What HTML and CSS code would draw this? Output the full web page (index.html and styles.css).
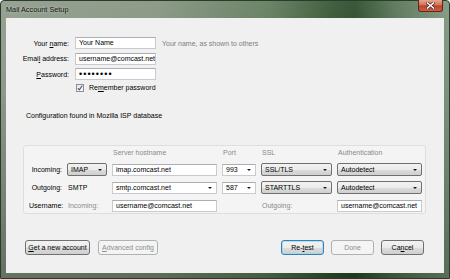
FILE: index.html
```html
<!DOCTYPE html>
<html>
<head>
<meta charset="utf-8">
<link rel="stylesheet" href="styles.css">
</head>
<body>
<div class="window">
  <div class="titlebar">
    <span class="title">Mail Account Setup</span>
    <span class="close">
      <svg width="9" height="7" viewBox="0 0 9 7">
        <path d="M1.5 1 L7.5 6 M7.5 1 L1.5 6" stroke="#4a2a22" stroke-width="3" stroke-linecap="square"/>
        <path d="M1.5 1 L7.5 6 M7.5 1 L1.5 6" stroke="#ffffff" stroke-width="1.6" stroke-linecap="square"/>
      </svg>
    </span>
  </div>
  <div class="content">
    <div class="form">
      <span class="lbl">Your <u>n</u>ame:</span>
      <span class="field">Your Name</span>
      <span class="hint">Your name, as shown to others</span>
      <span class="lbl">Emai<u>l</u> address:</span>
      <span class="field">username@comcast.net</span>
      <span></span>
      <span class="lbl"><u>P</u>assword:</span>
      <span class="field dots">••••••••</span>
      <span></span>
    </div>
    <div class="remember">
      <span class="check">
        <svg width="6" height="6" viewBox="0 0 6 6"><path d="M0.8 3.2 L2.3 4.8 L5.2 0.8" fill="none" stroke="#3b5a86" stroke-width="1.1"/></svg>
      </span>
      <span>Re<u>m</u>ember password</span>
    </div>
    <p class="found">Configuration found in Mozilla ISP database</p>
    <div class="box">
      <span></span><span></span>
      <span class="head">Server hostname</span>
      <span class="head">Port</span>
      <span class="head">SSL</span>
      <span class="head">Authentication</span>

      <span class="lbl">Incoming:</span>
      <span class="select">IMAP<i class="arrow"></i></span>
      <span class="field">imap.comcast.net</span>
      <span class="field combo">993<i class="arrow"></i></span>
      <span class="select">SSL/TLS<i class="arrow"></i></span>
      <span class="select">Autodetect<i class="arrow"></i></span>

      <span class="lbl">Outgoing:</span>
      <span class="plain">SMTP</span>
      <span class="field combo">smtp.comcast.net<i class="arrow"></i></span>
      <span class="field combo">587<i class="arrow"></i></span>
      <span class="select">STARTTLS<i class="arrow"></i></span>
      <span class="select">Autodetect<i class="arrow"></i></span>

      <span class="lbl">Username:</span>
      <span class="plain muted">Incoming:</span>
      <span class="field">username@comcast.net</span>
      <span></span>
      <span class="plain muted">Outgoing:</span>
      <span class="field">username@comcast.net</span>
    </div>
    <div class="buttons">
      <span class="btn wide1"><u>G</u>et a new account</span>
      <span class="btn wide2 disabled"><u>A</u>dvanced config</span>
      <span class="spacer"></span>
      <span class="btn focus">Re-<u>t</u>est</span>
      <span class="btn disabled">Done</span>
      <span class="btn">Ca<u>n</u>cel</span>
    </div>
  </div>
</div>
</body>
</html>
```

FILE: styles.css
```css
* { box-sizing: border-box; }
html, body { margin: 0; padding: 0; }
body {
  width: 450px;
  height: 279px;
  overflow: hidden;
  background: #ffffff;
  font-family: "Liberation Sans", Arial, sans-serif;
  font-size: 7px;
  color: #000000;
}
u { text-decoration: underline; text-underline-offset: 1px; }

.window {
  width: 450px;
  height: 279px;
  display: flex;
  flex-direction: column;
  padding: 0 5px 5px 5px;
  border: 1px solid #2a3a2c;
  border-radius: 4px 4px 0 0;
  background:
    linear-gradient(180deg, rgba(255,255,255,0.08) 0%, rgba(0,0,0,0) 30%, rgba(0,20,0,0.3) 100%),
    linear-gradient(90deg, #8e9b8a 0%, #84937f 35%, #5f7a5b 60%, #33532f 74%, #2a4a29 79%, #557254 88%, #7f957d 100%);
}

.titlebar {
  height: 17px;
  display: flex;
  justify-content: space-between;
  align-items: flex-start;
}
.title {
  line-height: 17px;
  font-size: 7.3px;
  color: #111;
  text-shadow: 0 0 3px rgba(255,255,255,0.6);
}
.close {
  width: 25px;
  height: 12px;
  margin-top: -1px;
  margin-right: 1px;
  display: flex;
  align-items: center;
  justify-content: center;
  border: 1px solid #5a2a20;
  border-top: none;
  border-radius: 0 0 3px 3px;
  background: linear-gradient(180deg, #e6a48f 0%, #d77a60 40%, #c0412a 55%, #cf5f42 100%);
}
.close svg { display: block; }

.content {
  flex: 1;
  background: #f0f0f0;
  display: flex;
  flex-direction: column;
}

.form {
  display: grid;
  grid-template-columns: 63px 81px auto;
  grid-auto-rows: 12px;
  column-gap: 6px;
  row-gap: 3.5px;
  margin-top: 19px;
  align-items: center;
}
.lbl { text-align: right; white-space: nowrap; }
.hint { color: #7d7d7d; white-space: nowrap; }

.field {
  position: relative;
  height: 12px;
  line-height: 10px;
  padding: 0 3px;
  background: #ffffff;
  border: 1px solid #c8cad0;
  border-top-color: #abadb3;
  color: #000;
  white-space: nowrap;
  overflow: hidden;
}
.dots { font-size: 9px; letter-spacing: 1.05px; line-height: 10px; }

.remember {
  margin-top: 3px;
  height: 9px;
  padding-left: 70px;
  display: flex;
  align-items: center;
  gap: 5px;
}
.check {
  width: 8px;
  height: 8px;
  border: 1px solid #8e8f8f;
  background: linear-gradient(180deg, #e6e6e6, #fbfbfb);
  display: flex;
  align-items: center;
  justify-content: center;
}
.check svg { display: block; }

.found {
  margin: 19px 0 0 20px;
  line-height: 10px;
}

.box {
  margin: 24px 0 0 17px;
  width: 403px;
  height: 69px;
  padding: 1px 3px 1px 5px;
  border: 1px solid #dedede;
  border-radius: 3px;
  background: #f4f4f4;
  display: grid;
  grid-template-columns: 33px 40px 105px 34px 71px 85px;
  grid-template-rows: 11px 13px 13px 13px;
  column-gap: 5px;
  row-gap: 5px;
  align-items: center;
}
.head { color: #8a8a8a; padding-left: 1px; white-space: nowrap; }
.plain { padding-left: 1px; white-space: nowrap; }
.muted { color: #8a8a8a; }

.select {
  position: relative;
  height: 13px;
  line-height: 11px;
  padding: 0 3px;
  border: 1px solid #707070;
  border-radius: 2px;
  background: linear-gradient(180deg, #f2f2f2 0%, #ebebeb 50%, #dddddd 51%, #cfcfcf 100%);
  white-space: nowrap;
}
.box .field { height: 12px; }
.arrow {
  position: absolute;
  right: 4px;
  top: 50%;
  margin-top: -1px;
  width: 0;
  height: 0;
  border-left: 2px solid transparent;
  border-right: 2px solid transparent;
  border-top: 2.5px solid #1a1a1a;
}

.buttons {
  margin-top: 26px;
  height: 15px;
  display: flex;
  padding: 0 20px 0 19px;
  gap: 7px;
}
.spacer { flex: 1; }
.btn {
  width: 43px;
  height: 15px;
  line-height: 13px;
  text-align: center;
  border: 1px solid #707070;
  border-radius: 3px;
  background: linear-gradient(180deg, #f2f2f2 0%, #ebebeb 50%, #dddddd 51%, #cfcfcf 100%);
  white-space: nowrap;
}
.wide1 { width: 65px; margin-right: 1px; }
.wide2 { width: 60px; }
.disabled {
  border-color: #adb2b5;
  background: #f4f4f4;
  color: #8d8d8d;
}
.focus {
  border-color: #3c7fb1;
  box-shadow: inset 0 0 0 1px rgba(140, 215, 245, 0.7);
}
```
